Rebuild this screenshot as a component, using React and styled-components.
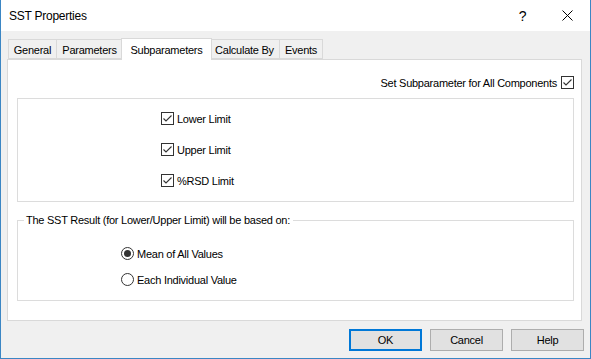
import React from 'react'
import styled, { createGlobalStyle } from 'styled-components'

const GlobalStyle = createGlobalStyle`
    html, body {
        margin: 0;
        padding: 0;
        background: #ffffff;
    }
    body {
        font-family: "Liberation Sans", Arial, sans-serif;
        font-size: 11px;
        letter-spacing: -0.25px;
        color: #000000;
    }
`

const Window = styled.div`
    width: 591px;
    height: 359px;
    box-sizing: border-box;
    border: 1px solid #3b86c4;
    border-top: none;
    display: flex;
    flex-direction: column;
    background: #f0f0f0;
`

const TitleBar = styled.div`
    height: 31px;
    background: #ffffff;
    display: flex;
    align-items: center;
    padding-left: 8px;
    font-size: 12px;
`

const Title = styled.span`
    flex: 1;
`

const TitleButton = styled.div`
    width: 45px;
    height: 31px;
    display: flex;
    align-items: center;
    justify-content: center;
    font-size: 14px;
`

const Body = styled.div`
    flex: 1;
    display: flex;
    flex-direction: column;
    padding: 7px 7px 0 6px;
`

const TabRow = styled.div`
    display: flex;
    align-items: flex-end;
    height: 21px;
    padding-left: 1px;
    position: relative;
    z-index: 1;
`

const Tab = styled.div`
    box-sizing: border-box;
    width: ${p => p.$w}px;
    height: ${p => (p.$active ? 22 : 20)}px;
    margin: 0 ${p => (p.$active ? -2 : 0)}px ${p => (p.$active ? -1 : 0)}px;
    border: 1px solid #d9d9d9;
    border-bottom: ${p => (p.$active ? 'none' : '1px solid #d9d9d9')};
    border-left: ${p => (p.$first || p.$active ? '1px solid #d9d9d9' : 'none')};
    background: ${p => (p.$active ? '#ffffff' : '#f0f0f0')};
    display: flex;
    align-items: center;
    justify-content: center;
    padding-top: ${p => (p.$active ? 0 : 1)}px;
    white-space: nowrap;
    position: relative;
    z-index: ${p => (p.$active ? 2 : 1)};
`

const Panel = styled.div`
    box-sizing: border-box;
    width: 575px;
    height: 262px;
    background: #ffffff;
    border: 1px solid #d9d9d9;
    padding: 15px 7px 0 9px;
    display: flex;
    flex-direction: column;
`

const AllRow = styled.label`
    display: flex;
    justify-content: flex-end;
    align-items: center;
    gap: 4px;
    height: 15px;
`

const GroupBox = styled.fieldset`
    box-sizing: border-box;
    margin: ${p => p.$top}px 0 0 0;
    height: ${p => p.$h}px;
    border: 1px solid #dcdcdc;
    padding: 0;
    display: flex;
    flex-direction: column;
    align-items: flex-start;
`

const Legend = styled.legend`
    margin-left: 6px;
    padding: 0 3px 0 2px;
    line-height: 14px;
`

const OptionList = styled.div`
    display: flex;
    flex-direction: column;
    gap: ${p => p.$gap}px;
    padding: ${p => p.$pad};
`

const Option = styled.label`
    display: flex;
    align-items: center;
    gap: 3px;
    height: 15px;
    white-space: nowrap;
`

const Box = styled.span`
    box-sizing: border-box;
    width: 13px;
    height: 13px;
    border: 1px solid #333333;
    background: #ffffff;
    display: inline-flex;
    align-items: center;
    justify-content: center;
    border-radius: ${p => (p.$round ? '50%' : '0')};
    flex-shrink: 0;
`

const Dot = styled.span`
    width: 7px;
    height: 7px;
    border-radius: 50%;
    background: #333333;
`

const ButtonRow = styled.div`
    display: flex;
    justify-content: flex-end;
    gap: 8px;
    padding: 8px 0 0 0;
    margin-right: -1px;
`

const Button = styled.button`
    box-sizing: border-box;
    width: 73px;
    height: 22px;
    font-family: inherit;
    font-size: 11px;
    letter-spacing: inherit;
    color: #000000;
    background: #e1e1e1;
    border: ${p => (p.$primary ? '2px solid #0078d7' : '1px solid #adadad')};
    padding: 0;
`

function Check() {
    return (
        <Box>
            <svg width="11" height="11" viewBox="0 0 11 11">
                <path d="M1.5 5.5 L4 8 L9.5 2.5" fill="none" stroke="#333" strokeWidth="1.1" />
            </svg>
        </Box>
    )
}

function Radio({ checked }) {
    return <Box $round>{checked && <Dot />}</Box>
}

const tabs = [
    { name: 'General', w: 49 },
    { name: 'Parameters', w: 66 },
    { name: 'Subparameters', w: 91, active: true },
    { name: 'Calculate By', w: 70 },
    { name: 'Events', w: 43 },
]

export default function App() {
    return (
        <>
            <GlobalStyle />
            <Window>
                <TitleBar>
                    <Title>SST Properties</Title>
                    <TitleButton>?</TitleButton>
                    <TitleButton>
                        <svg width="11" height="11" viewBox="0 0 11 11">
                            <path d="M0.5 0.5 L10.5 10.5 M10.5 0.5 L0.5 10.5" stroke="#000" strokeWidth="1" />
                        </svg>
                    </TitleButton>
                </TitleBar>
                <Body>
                    <TabRow>
                        {tabs.map((t, i) => (
                            <Tab key={t.name} $w={t.w} $active={t.active} $first={i === 0}>
                                {t.name}
                            </Tab>
                        ))}
                    </TabRow>
                    <Panel>
                        <AllRow>
                            Set Subparameter for All Components
                            <Check />
                        </AllRow>
                        <GroupBox $top={8} $h={104}>
                            <OptionList $gap={16} $pad="12px 0 0 143px">
                                <Option><Check />Lower Limit</Option>
                                <Option><Check />Upper Limit</Option>
                                <Option><Check />%RSD Limit</Option>
                            </OptionList>
                        </GroupBox>
                        <GroupBox $top={11} $h={88}>
                            <Legend>The SST Result (for Lower/Upper Limit) will be based on:</Legend>
                            <OptionList $gap={11} $pad="19px 0 0 103px">
                                <Option><Radio checked />Mean of All Values</Option>
                                <Option><Radio />Each Individual Value</Option>
                            </OptionList>
                        </GroupBox>
                    </Panel>
                    <ButtonRow>
                        <Button $primary>OK</Button>
                        <Button>Cancel</Button>
                        <Button>Help</Button>
                    </ButtonRow>
                </Body>
            </Window>
        </>
    )
}
